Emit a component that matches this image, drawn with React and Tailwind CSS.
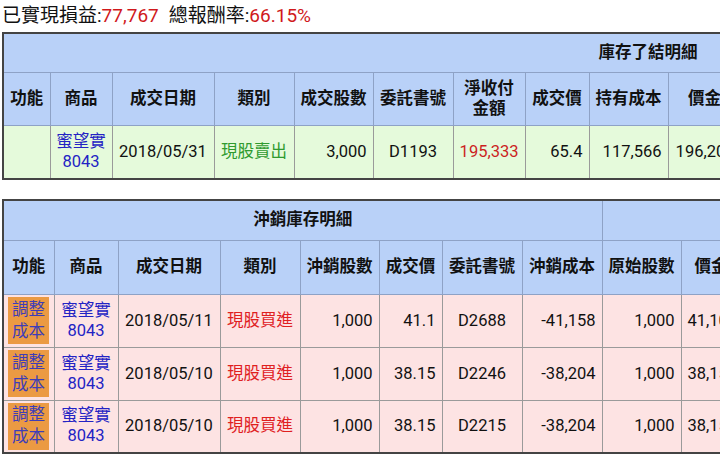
import React from "react";

const cols1 = [47, 62, 102, 80, 79, 80, 72, 64, 79, 73, 110, 110, 110, 110, 112];
const cols2 = [51, 64, 102, 80, 79, 63, 80, 80, 79, 60, 100, 100];

const heads1 = ["功能", "商品", "成交日期", "類別", "成交股數", "委託書號", "淨收付金額", "成交價", "持有成本", "價金", "手續費", "交易稅", "損益", "報酬率", "備註"];
const heads2 = ["功能", "商品", "成交日期", "類別", "沖銷股數", "成交價", "委託書號", "沖銷成本", "原始股數", "價金", "手續費", "持有天數"];

const offsets = [
  { date: "2018/05/11", qty: "1,000", price: "41.1", order: "D2688", cost: "-41,158", orig: "1,000", amount: "41,100", fee: "58", days: "20" },
  { date: "2018/05/10", qty: "1,000", price: "38.15", order: "D2246", cost: "-38,204", orig: "1,000", amount: "38,150", fee: "54", days: "21" },
  { date: "2018/05/10", qty: "1,000", price: "38.15", order: "D2215", cost: "-38,204", orig: "1,000", amount: "38,150", fee: "54", days: "21" },
];

const sum = (a) => a.reduce((s, n) => s + n, 0);

const th = "border border-[#8ea2c6] px-1 font-bold text-center leading-[20px]";
const td = "border border-[#9a9a9a] px-[6px] leading-[20px] whitespace-nowrap";

function Product() {
  return (
    <td className="border border-[#9a9a9a] px-0 text-center leading-[20px] whitespace-nowrap text-[#2323c4]">
      蜜望實
      <br />
      8043
    </td>
  );
}

export default function App() {
  return (
    <div className="w-[720px] h-[457px] overflow-hidden bg-white text-[#111] font-[Roboto,'Noto_Sans_CJK_TC',sans-serif]">
      <div className="w-max pl-[2px]">
        <div className="h-[32px] pt-[3px] text-[19px] leading-[26px]">
          已實現損益:<span className="text-[#d0191c]">77,767</span>
          <span className="ml-[10px]">總報酬率:</span>
          <span className="text-[#d0191c]">66.15%</span>
        </div>

        <table
          className="border-collapse table-fixed border-2 border-[#444] text-[16.5px]"
          style={{ width: sum(cols1) }}
        >
          <colgroup>
            {cols1.map((w, i) => (
              <col key={i} style={{ width: w }} />
            ))}
          </colgroup>
          <tbody>
            <tr className="h-[39px] bg-[#b9d1f8]">
              <th colSpan={cols1.length} className={th}>
                庫存了結明細
              </th>
            </tr>
            <tr className="h-[53px] bg-[#b9d1f8]">
              {heads1.map((h) => (
                <th key={h} className={th}>
                  {h}
                </th>
              ))}
            </tr>
            <tr className="h-[54px] bg-[#e5fadb]">
              <td className={td}></td>
              <Product />
              <td className={`${td} text-center`}>2018/05/31</td>
              <td className={`${td} text-center text-[#2f9a2f]`}>現股賣出</td>
              <td className={`${td} text-right`}>3,000</td>
              <td className={`${td} text-center`}>D1193</td>
              <td className={`${td} text-right text-[#cc1f1f]`}>195,333</td>
              <td className={`${td} text-right`}>65.4</td>
              <td className={`${td} text-right`}>117,566</td>
              <td className={`${td} text-right`}>196,200</td>
              <td className={`${td} text-right`}>279</td>
              <td className={`${td} text-right`}>588</td>
              <td className={`${td} text-right`}>77,767</td>
              <td className={`${td} text-right`}>66.15%</td>
              <td className={td}></td>
            </tr>
          </tbody>
        </table>

        <table
          className="mt-[19px] border-collapse table-fixed border-2 border-[#444] text-[16.5px]"
          style={{ width: sum(cols2) }}
        >
          <colgroup>
            {cols2.map((w, i) => (
              <col key={i} style={{ width: w }} />
            ))}
          </colgroup>
          <tbody>
            <tr className="h-[40px] bg-[#b9d1f8]">
              <th colSpan={8} className={th}>
                沖銷庫存明細
              </th>
              <th colSpan={cols2.length - 8} className={th}></th>
            </tr>
            <tr className="h-[54px] bg-[#b9d1f8]">
              {heads2.map((h) => (
                <th key={h} className={th}>
                  {h}
                </th>
              ))}
            </tr>
            {offsets.map((r, i) => (
              <tr key={i} className="h-[53px] bg-[#fde3e3]">
                <td className="border border-[#9a9a9a] px-[4px]">
                  <button className="w-[41px] h-[47px] bg-[#eb9a43] text-[#3d3db8] text-[16.5px] leading-[22px] flex flex-col items-center justify-center">
                    <span>調整</span>
                    <span>成本</span>
                  </button>
                </td>
                <Product />
                <td className={`${td} text-center`}>{r.date}</td>
                <td className={`${td} text-center text-[#e0201f]`}>現股買進</td>
                <td className={`${td} text-right`}>{r.qty}</td>
                <td className={`${td} text-right`}>{r.price}</td>
                <td className={`${td} text-center`}>{r.order}</td>
                <td className={`${td} text-right`}>{r.cost}</td>
                <td className={`${td} text-right`}>{r.orig}</td>
                <td className={`${td} text-right`}>{r.amount}</td>
                <td className={`${td} text-right`}>{r.fee}</td>
                <td className={`${td} text-right`}>{r.days}</td>
              </tr>
            ))}
          </tbody>
        </table>
      </div>
    </div>
  );
}
